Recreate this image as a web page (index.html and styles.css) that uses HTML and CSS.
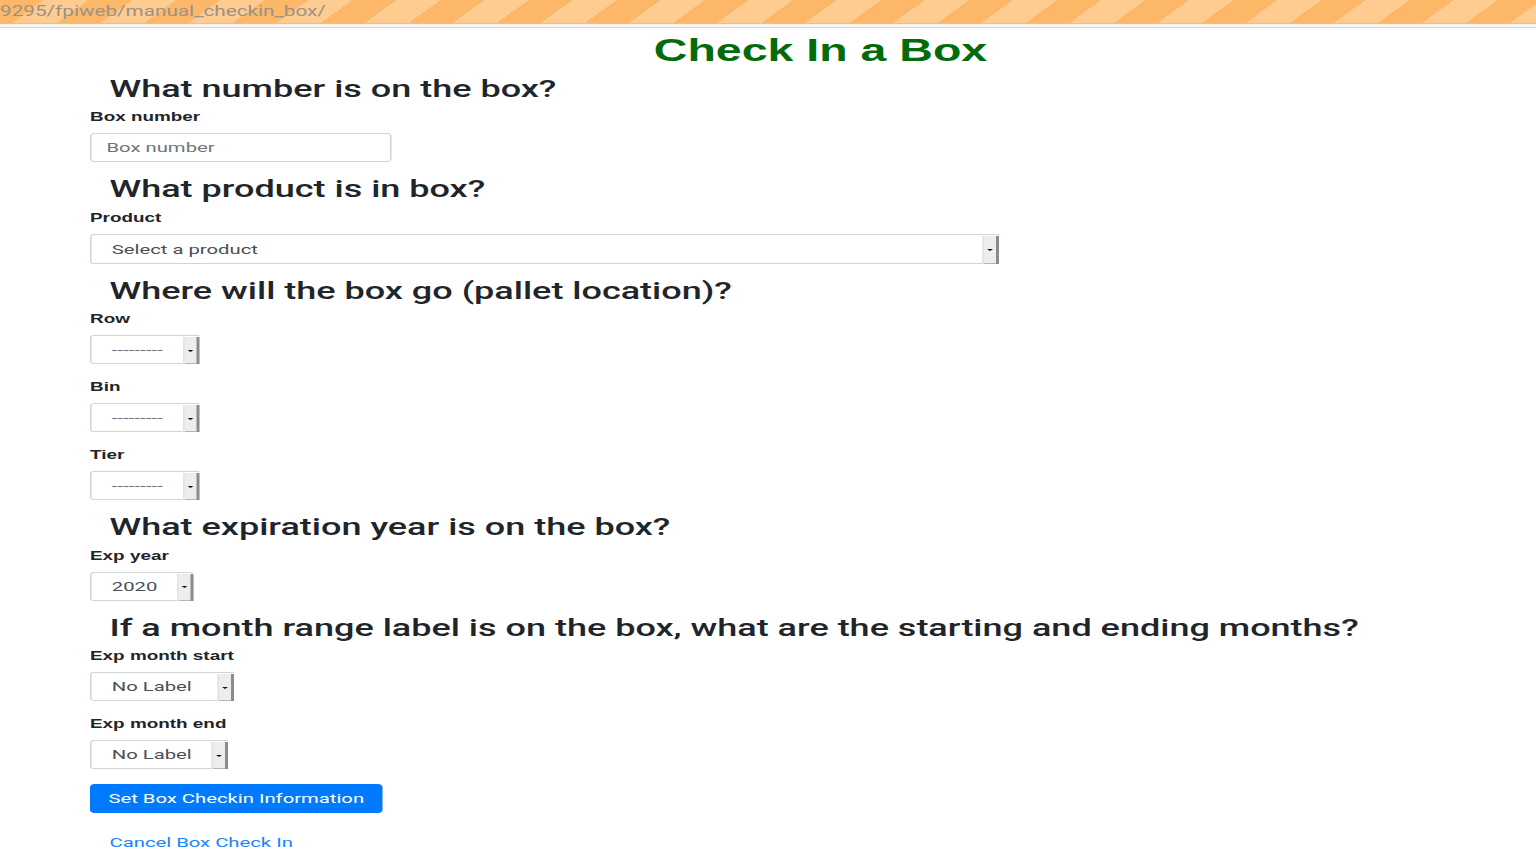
FILE: index.html
```html
<!DOCTYPE html>
<html lang="en">
<head>
<meta charset="utf-8">
<title>Check In a Box</title>
<link rel="stylesheet" href="styles.css">
</head>
<body>
<div class="page">
  <div class="urlbar"><span class="url">9295/fpiweb/manual_checkin_box/</span></div>
  <div class="urlbar-shadow"></div>
  <main class="content">
    <h1 class="title">Check In a Box</h1>
    <form class="form">
      <h2 class="question">What number is on the box?</h2>
      <div class="group">
        <label class="label">Box number</label>
        <div class="input input-box">Box number</div>
      </div>

      <h2 class="question">What product is in box?</h2>
      <div class="group">
        <label class="label">Product</label>
        <div class="sel sel-product"><span class="sel-text">Select a product</span><span class="sel-btn"><span class="tri"></span></span></div>
      </div>

      <h2 class="question">Where will the box go (pallet location)?</h2>
      <div class="group">
        <label class="label">Row</label>
        <div class="sel sel-loc"><span class="sel-text dashes">---------</span><span class="sel-btn"><span class="tri"></span></span></div>
      </div>
      <div class="group">
        <label class="label">Bin</label>
        <div class="sel sel-loc"><span class="sel-text dashes">---------</span><span class="sel-btn"><span class="tri"></span></span></div>
      </div>
      <div class="group">
        <label class="label">Tier</label>
        <div class="sel sel-loc"><span class="sel-text dashes">---------</span><span class="sel-btn"><span class="tri"></span></span></div>
      </div>

      <h2 class="question">What expiration year is on the box?</h2>
      <div class="group">
        <label class="label">Exp year</label>
        <div class="sel sel-year"><span class="sel-text">2020</span><span class="sel-btn"><span class="tri"></span></span></div>
      </div>

      <h2 class="question">If a month range label is on the box, what are the starting and ending months?</h2>
      <div class="group">
        <label class="label">Exp month start</label>
        <div class="sel sel-mstart"><span class="sel-text">No Label</span><span class="sel-btn"><span class="tri"></span></span></div>
      </div>
      <div class="group group-last">
        <label class="label">Exp month end</label>
        <div class="sel sel-mend"><span class="sel-text">No Label</span><span class="sel-btn"><span class="tri"></span></span></div>
      </div>

      <div class="actions">
        <button type="button" class="btn">Set Box Checkin Information</button>
        <a class="cancel" href="#">Cancel Box Check In</a>
      </div>
    </form>
  </main>
</div>
</body>
</html>
```

FILE: styles.css
```css
html, body {
  margin: 0;
  padding: 0;
  background: #ffffff;
  overflow: hidden;
}

body {
  font-family: Roboto, "Liberation Sans", Arial, sans-serif;
  color: #212529;
}

.page {
  width: 1024px;
  transform: scaleX(1.5);
  transform-origin: 0 0;
}

.urlbar {
  height: 24px;
  box-sizing: border-box;
  border-bottom: 1px solid #c9c6c2;
  background: repeating-linear-gradient(132.5deg, #fdb768 0 21.6px, #fecb91 21.6px 43.3px);
  display: flex;
  align-items: center;
}

.url {
  font-size: 13.8px;
  color: #9a918a;
  line-height: 1;
}

.urlbar-shadow {
  height: 3px;
  background: #f6f5f4;
  border-bottom: 1px solid #dcdad7;
}

.content {
  padding: 0 0 0 60px;
}

.title {
  margin: 4px 0 7px 10px;
  text-align: center;
  font-family: "Liberation Sans", Arial, sans-serif;
  font-size: 31px;
  line-height: 37px;
  font-weight: 700;
  color: #036b0a;
}

.form {
  display: flex;
  flex-direction: column;
  align-items: flex-start;
}

.question {
  margin: 0 0 6px 0;
  padding-left: 13px;
  font-size: 24px;
  line-height: 26.4px;
  font-weight: 500;
  color: #212529;
}

.group {
  margin-bottom: 14px;
}

.group-last {
  margin-bottom: 15px;
}

.label {
  display: block;
  font-family: "Liberation Sans", Arial, sans-serif;
  font-size: 12.6px;
  line-height: 18px;
  font-weight: 700;
  margin-bottom: 7px;
  color: #212529;
}

.input {
  box-sizing: border-box;
  height: 29px;
  border: 1px solid #ced4da;
  border-radius: 3px;
  padding: 0 10px;
  font-size: 13.5px;
  line-height: 27px;
  color: #6c757d;
}

.input-box { width: 201px; }

.sel {
  box-sizing: border-box;
  height: 29px;
  display: flex;
  align-items: stretch;
  border: 1px solid #ced4da;
  border-right: none;
  border-radius: 3px 0 0 3px;
  font-size: 13.5px;
  color: #495057;
}

.sel-text {
  flex: 1;
  padding-left: 13.5px;
  line-height: 27px;
  white-space: nowrap;
}

.dashes {
  font-size: 13px;
  color: #6d7278;
  letter-spacing: 0.2px;
}

.sel-btn {
  width: 8px;
  margin: 1px 0 -1px 0;
  background: #ededed;
  border-left: 1px solid #e2e2e2;
  border-right: 2px solid #8b8b8b;
  box-shadow: inset 0 -1px 0 #b5b5b5;
  display: flex;
  align-items: center;
  justify-content: center;
}

.tri {
  width: 0;
  height: 0;
  border-left: 2px solid transparent;
  border-right: 2px solid transparent;
  border-top: 2.5px solid #111;
}

.sel-product { width: 606px; height: 30px; }
.sel-product .sel-text { line-height: 28px; }
.sel-loc { width: 73px; }
.sel-year { width: 69px; }
.sel-mstart { width: 96px; }
.sel-mend { width: 92px; }

.actions {
  display: flex;
  flex-direction: column;
  align-items: flex-start;
}

.btn {
  box-sizing: border-box;
  height: 29px;
  width: 195px;
  padding: 0;
  border: 1px solid #007bff;
  border-radius: 3px;
  background: #007bff;
  color: #ffffff;
  font-family: Roboto, "Liberation Sans", Arial, sans-serif;
  font-size: 13.5px;
  line-height: 27px;
  text-align: center;
}

.cancel {
  display: inline-block;
  margin-top: 15px;
  padding: 0 13px;
  line-height: 29px;
  font-size: 13.5px;
  color: #1a85ff;
  text-decoration: none;
}
```
